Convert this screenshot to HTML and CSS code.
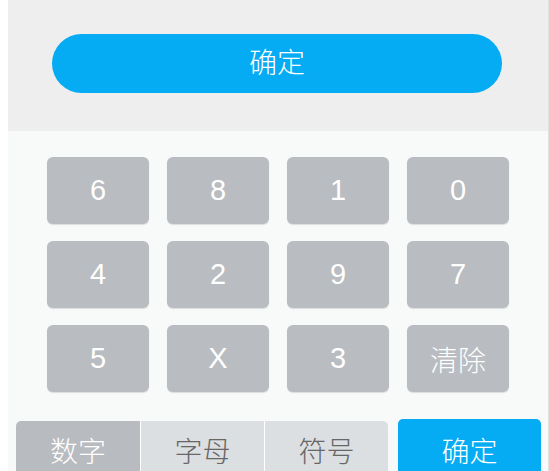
FILE: index.html
```html
<!DOCTYPE html>
<html lang="zh-CN">
<head>
<meta charset="utf-8">
<title>键盘</title>
<link rel="stylesheet" href="styles.css">
</head>
<body>
<div class="screen">
  <section class="top">
    <button class="pill">确定</button>
  </section>
  <section class="pad">
    <div class="keys">
      <div class="key">6</div>
      <div class="key">8</div>
      <div class="key">1</div>
      <div class="key">0</div>
      <div class="key">4</div>
      <div class="key">2</div>
      <div class="key">9</div>
      <div class="key">7</div>
      <div class="key">5</div>
      <div class="key">X</div>
      <div class="key">3</div>
      <div class="key cjk">清除</div>
    </div>
    <div class="bar">
      <div class="tabs">
        <div class="tab active">数字</div>
        <div class="tab">字母</div>
        <div class="tab">符号</div>
      </div>
      <div class="ok">确定</div>
    </div>
  </section>
</div>
</body>
</html>
```

FILE: styles.css
```css
html, body {
  margin: 0;
  padding: 0;
  background: #ffffff;
  height: 471px;
  overflow: hidden;
}
body {
  font-family: "Liberation Sans", "Noto Sans CJK SC", sans-serif;
}
.screen {
  margin-left: 8px;
  width: 540px;
  height: 471px;
  border-right: 1px solid #e2e2e2;
  background: #f8f9f9;
}
.top {
  background: #eeeeee;
  height: 131px;
  padding-top: 34px;
  box-sizing: border-box;
}
.pill {
  display: block;
  margin: 0 0 0 44px;
  width: 450px;
  height: 59px;
  border: none;
  border-radius: 30px;
  background: #05abf3;
  color: #ffffff;
  font-family: "Noto Sans CJK SC", sans-serif;
  font-size: 28px;
  font-weight: 300;
  padding: 0 0 6px 0;
  line-height: 1;
}
.pad {
  padding-top: 26px;
}
.keys {
  display: grid;
  grid-template-columns: repeat(4, 102px);
  grid-auto-rows: 67px;
  column-gap: 18px;
  row-gap: 17px;
  padding-left: 39px;
}
.key {
  background: #b9bcc0;
  border-radius: 6px;
  box-shadow: 0 1px 1px rgba(0, 0, 0, 0.12);
  color: #ffffff;
  font-size: 29px;
  display: flex;
  align-items: center;
  justify-content: center;
}
.key.cjk {
  font-family: "Noto Sans CJK SC", sans-serif;
  font-weight: 300;
  font-size: 28px;
}
.bar {
  display: flex;
  align-items: flex-start;
  margin-top: 27px;
  padding-left: 8px;
}
.tabs {
  display: flex;
  gap: 1px;
  margin-top: 2px;
  background: #ffffff;
  border-radius: 5px 5px 0 0;
  overflow: hidden;
}
.tab {
  width: 123px;
  height: 60px;
  background: #dcdfe1;
  color: #676767;
  font-family: "Noto Sans CJK SC", sans-serif;
  font-weight: 300;
  font-size: 28px;
  text-align: center;
  padding-top: 9px;
  box-sizing: border-box;
}
.tab.active {
  width: 124px;
  background: #b8bbbf;
  color: #ffffff;
}
.ok {
  margin-left: 10px;
  width: 143px;
  height: 62px;
  background: #05abf3;
  border-radius: 5px 5px 0 0;
  color: #ffffff;
  font-family: "Noto Sans CJK SC", sans-serif;
  font-weight: 300;
  font-size: 28px;
  text-align: center;
  padding-top: 11px;
  box-sizing: border-box;
}
```
